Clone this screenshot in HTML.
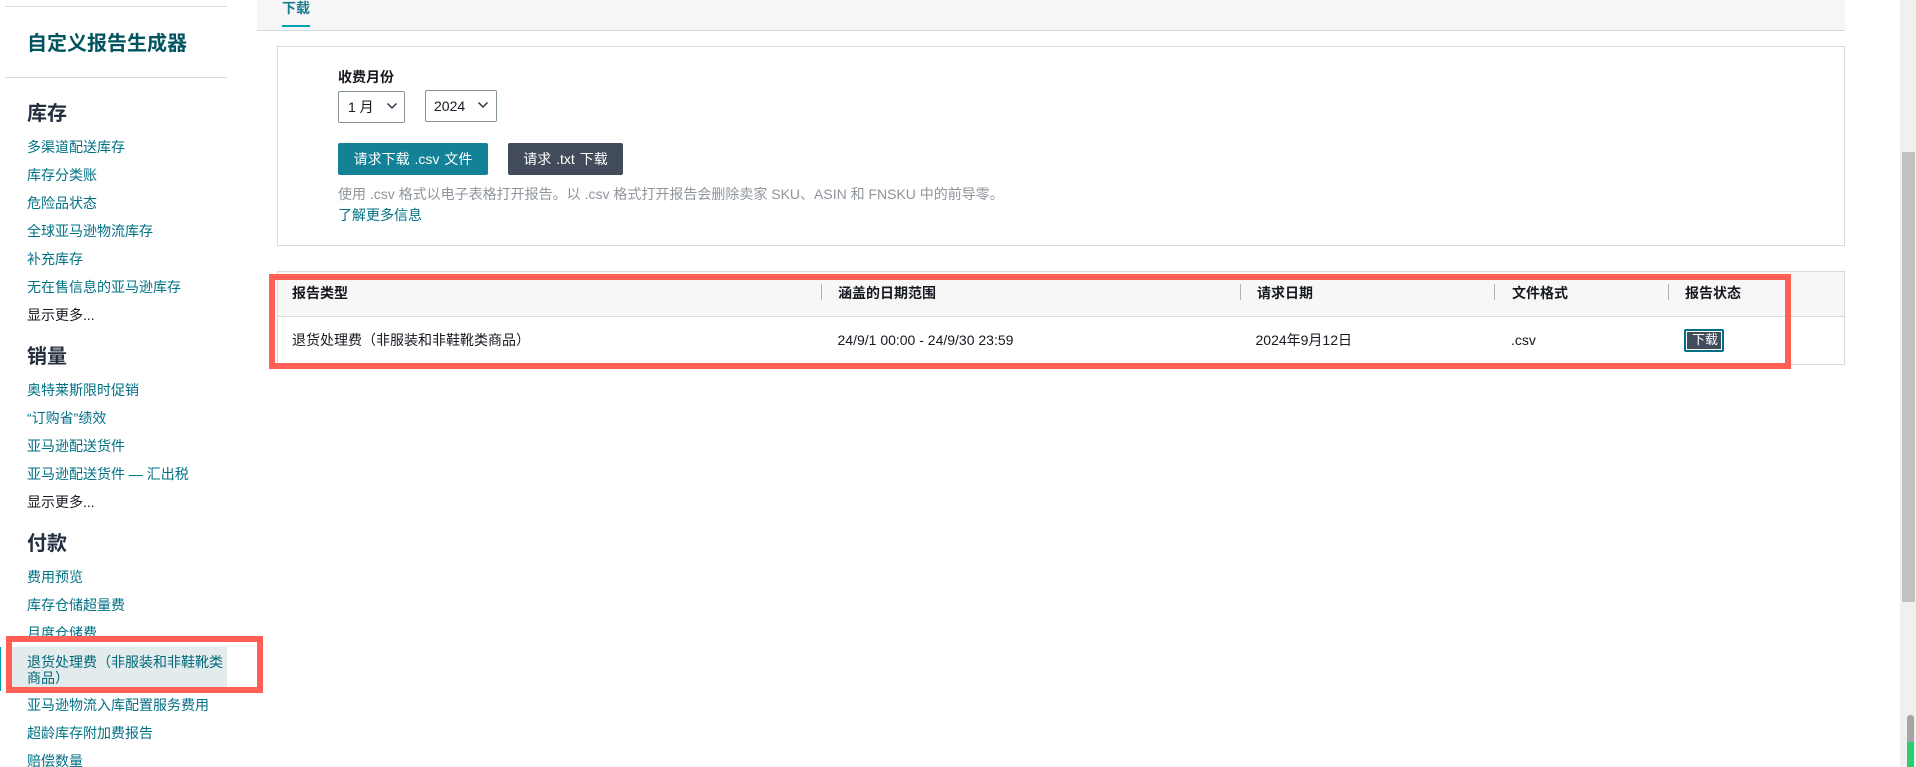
<!DOCTYPE html>
<html lang="zh">
<head>
<meta charset="utf-8">
<title>自定义报告生成器</title>
<style>
html,body{margin:0;padding:0;width:1916px;height:767px;overflow:hidden;background:#fff;}
body{position:relative;font-family:"Liberation Sans","Noto Sans CJK SC",sans-serif;font-size:14px;color:#16191f;}
.a{position:absolute;white-space:nowrap;line-height:20px;}
.box{position:absolute;box-sizing:border-box;}
.h{font-size:20px;font-weight:700;line-height:28px;color:#232f3e;left:27px;}
.l{left:27px;color:#007185;margin-top:-10px;}
.m{left:27px;color:#16191f;margin-top:-10px;}
.th{font-weight:700;color:#16191f;top:283px;}
.td{color:#16191f;top:330px;}
.sep{position:absolute;width:1px;top:284px;height:16px;background:#aab7b8;}
.sel{position:absolute;box-sizing:border-box;border:1px solid #879596;border-radius:2px;background:#fff;}
.btn{position:absolute;height:32px;top:143px;border-radius:2px;color:#fff;line-height:32px;text-align:center;white-space:nowrap;word-spacing:1px;}
</style>
</head>
<body>
<!-- sidebar -->
<div class="box" style="left:5px;top:6px;width:222px;height:1px;background:#d5dbdb"></div>
<div class="a" style="left:27px;top:30px;font-size:20px;font-weight:700;line-height:28px;color:#00535f">自定义报告生成器</div>
<div class="box" style="left:5px;top:77px;width:222px;height:1px;background:#d5dbdb"></div>

<div class="a h" style="top:100px">库存</div>
<div class="a l" style="top:147px">多渠道配送库存</div>
<div class="a l" style="top:175px">库存分类账</div>
<div class="a l" style="top:203px">危险品状态</div>
<div class="a l" style="top:231px">全球亚马逊物流库存</div>
<div class="a l" style="top:259px">补充库存</div>
<div class="a l" style="top:287px">无在售信息的亚马逊库存</div>
<div class="a m" style="top:315px">显示更多...</div>

<div class="a h" style="top:343px">销量</div>
<div class="a l" style="top:390px">奥特莱斯限时促销</div>
<div class="a l" style="top:418px">“订购省”绩效</div>
<div class="a l" style="top:446px">亚马逊配送货件</div>
<div class="a l" style="top:474px">亚马逊配送货件 — 汇出税</div>
<div class="a m" style="top:502px">显示更多...</div>

<div class="a h" style="top:530px">付款</div>
<div class="a l" style="top:577px">费用预览</div>
<div class="a l" style="top:605px">库存仓储超量费</div>
<div class="a l" style="top:633px">月度仓储费</div>

<div class="box" style="left:0;top:647px;width:1px;height:44px;background:#00a1b0"></div>
<div class="box" style="left:12px;top:647px;width:215px;height:44px;background:#e3ebec"></div>
<div class="a" style="left:27px;top:654px;width:200px;white-space:normal;line-height:16px;color:#00687a">退货处理费（非服装和非鞋靴类商品）</div>

<div class="a l" style="top:705px">亚马逊物流入库配置服务费用</div>
<div class="a l" style="top:733px">超龄库存附加费报告</div>
<div class="a l" style="top:761px">赔偿数量</div>

<div class="box" style="left:6px;top:636px;width:257px;height:57px;border:6px solid #ff5f55"></div>

<!-- tab bar -->
<div class="box" style="left:257px;top:0;width:1588px;height:31px;background:#f6f6f6;border-bottom:1px solid #d5dbdb"></div>
<div class="a" style="left:282px;top:-2px;font-weight:700;color:#1b7c90">下载</div>
<div class="box" style="left:282px;top:25px;width:28px;height:2px;background:#00a1b0"></div>

<!-- card -->
<div class="box" style="left:277px;top:46px;width:1568px;height:200px;border:1px solid #d5dbdb"></div>
<div class="a" style="left:338px;top:67px;font-weight:700;color:#16191f">收费月份</div>

<div class="sel" style="left:338px;top:91px;width:67px;height:32px"></div>
<div class="a" style="left:348px;top:97px;color:#16191f">1 月</div>
<svg class="box" style="left:385px;top:101px" width="14" height="10" viewBox="0 0 14 10"><path d="M2.5 2.5 L7 7 L11.5 2.5" fill="none" stroke="#232f3e" stroke-width="1.4"/></svg>

<div class="sel" style="left:425px;top:90px;width:72px;height:32px"></div>
<div class="a" style="left:434px;top:96px;color:#16191f">2024</div>
<svg class="box" style="left:476px;top:100px" width="14" height="10" viewBox="0 0 14 10"><path d="M2.5 2.5 L7 7 L11.5 2.5" fill="none" stroke="#232f3e" stroke-width="1.4"/></svg>

<div class="btn" style="left:338px;width:150px;background:#148296">请求下载 .csv 文件</div>
<div class="btn" style="left:508px;width:115px;background:#414b5a">请求 .txt 下载</div>

<div class="a" style="left:338px;top:184px;color:#8f959b">使用 .csv 格式以电子表格打开报告。以 .csv 格式打开报告会删除卖家 SKU、ASIN 和 FNSKU 中的前导零。</div>
<div class="a" style="left:338px;top:205px;color:#007185">了解更多信息</div>

<!-- table -->
<div class="box" style="left:277px;top:271px;width:1568px;height:94px;border:1px solid #d5dbdb;background:#fff"></div>
<div class="box" style="left:278px;top:272px;width:1566px;height:45px;background:#f7f7f7;border-bottom:1px solid #d5dbdb"></div>

<div class="a th" style="left:292px">报告类型</div>
<div class="sep" style="left:821px"></div>
<div class="a th" style="left:838px">涵盖的日期范围</div>
<div class="sep" style="left:1240px"></div>
<div class="a th" style="left:1257px">请求日期</div>
<div class="sep" style="left:1494px"></div>
<div class="a th" style="left:1512px">文件格式</div>
<div class="sep" style="left:1668px"></div>
<div class="a th" style="left:1685px">报告状态</div>

<div class="a td" style="left:292px">退货处理费（非服装和非鞋靴类商品）</div>
<div class="a td" style="left:837.5px">24/9/1 00:00 - 24/9/30 23:59</div>
<div class="a td" style="left:1255.5px">2024年9月12日</div>
<div class="a td" style="left:1511px">.csv</div>

<div class="box" style="left:1684px;top:329px;width:40px;height:23px;border:2px solid #007185;border-radius:2px;background:#414b5a;outline:1px solid #fff;outline-offset:-3px"></div>
<div class="a" style="left:1692px;top:330px;font-size:13px;color:#fff;width:26px;text-align:center">下载</div>

<div class="box" style="left:269px;top:274px;width:1522px;height:95px;border:6px solid #ff5f55"></div>

<!-- scrollbar -->
<div class="box" style="left:1900px;top:0;width:16px;height:767px;background:#f0f0f0"></div>
<div class="box" style="left:1902px;top:152px;width:13px;height:450px;background:#c1c1c1"></div>
<div class="box" style="left:1907px;top:715px;width:7px;height:52px;border-radius:3px 3px 0 0;background:#a5a5a5"></div>
<div class="box" style="left:1907px;top:742px;width:7px;height:25px;background:#2ecc71"></div>
</body>
</html>
